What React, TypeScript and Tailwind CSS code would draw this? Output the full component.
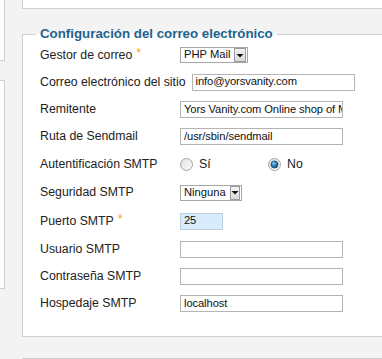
import React from "react";

const font = "font-['Liberation_Sans',Arial,sans-serif]";

function DropButton() {
  return (
    <span className="ml-auto flex h-[14px] w-[16px] items-center justify-center border border-[#9a9a9a] bg-[linear-gradient(180deg,#f4f4f4,#d9d9d9)]">
      <svg width="8" height="5" viewBox="0 0 8 5">
        <path d="M0.5 1h7L4 4.5z" fill="#111" />
      </svg>
    </span>
  );
}

function Select({ value, width }: { value: string; width: number }) {
  return (
    <div
      className="flex h-[16px] items-center border border-[#a7a7a7] bg-white pl-[3px] pr-[1px] text-[11.2px] leading-none text-[#111]"
      style={{ width }}
    >
      <span className="mr-[4px] whitespace-nowrap">{value}</span>
      <DropButton />
    </div>
  );
}

function Input({ value = "", width = 163, blue = false }: { value?: string; width?: number; blue?: boolean }) {
  return (
    <div
      className={`flex h-[17px] items-center overflow-hidden whitespace-nowrap border pl-[3px] text-[11.2px] leading-none tracking-[-0.1px] text-[#111] ${
        blue ? "border-[#b9cfdf] bg-[#d8ecfb]" : "border-[#b4b4b4] bg-white"
      }`}
      style={{ width }}
    >
      {value}
    </div>
  );
}

function Radio({ checked }: { checked?: boolean }) {
  return (
    <svg width="13" height="13" viewBox="0 0 13 13">
      <defs>
        <linearGradient id="rg-off" x1="0" y1="0" x2="1" y2="1">
          <stop offset="0" stopColor="#e2e2e2" />
          <stop offset="1" stopColor="#fbfbfb" />
        </linearGradient>
        <radialGradient id="rg-dot" cx="0.4" cy="0.35" r="0.7">
          <stop offset="0" stopColor="#8fd0f5" />
          <stop offset="0.45" stopColor="#2f82c0" />
          <stop offset="1" stopColor="#14466e" />
        </radialGradient>
      </defs>
      <circle cx="6.5" cy="6.5" r="6" fill="url(#rg-off)" stroke="#a3a3a3" />
      {checked && <circle cx="6.5" cy="6.5" r="3.6" fill="url(#rg-dot)" stroke="#1d4f77" strokeWidth="0.8" />}
    </svg>
  );
}

const rows: { label: string; req?: boolean; h: number; control: React.ReactNode }[] = [
  { label: "Gestor de correo", req: true, h: 26, control: <Select value="PHP Mail" width={68} /> },
  { label: "Correo electrónico del sitio", h: 28, control: <Input value="info@yorsvanity.com" width={163} /> },
  { label: "Remitente", h: 27, control: <Input value="Yors Vanity.com Online shop of Makeup" /> },
  { label: "Ruta de Sendmail", h: 27, control: <Input value="/usr/sbin/sendmail" /> },
  {
    label: "Autentificación SMTP",
    h: 28,
    control: (
      <div className="flex items-center text-[12.3px] text-[#222]">
        <Radio />
        <span className="ml-[6px] w-[69px]">Sí</span>
        <Radio checked />
        <span className="ml-[6px]">No</span>
      </div>
    )
  },
  { label: "Seguridad SMTP", h: 29, control: <Select value="Ninguna" width={62} /> },
  { label: "Puerto SMTP", req: true, h: 28, control: <Input value="25" width={43} blue /> },
  { label: "Usuario SMTP", h: 28, control: <Input /> },
  { label: "Contraseña SMTP", h: 27, control: <Input /> },
  { label: "Hospedaje SMTP", h: 27, control: <Input value="localhost" /> }
];

export default function App() {
  return (
    <div className={`flex h-[359px] w-[382px] overflow-hidden bg-[#f3f3f3] ${font}`}>
      {/* neighbouring column, mostly cut off */}
      <div className="flex w-[5px] shrink-0 flex-col">
        <div className="h-[61px] border-b border-r border-[#cfcfcf] bg-white" />
        <div className="h-[19px]" />
        <div className="h-[209px] border-y border-r border-[#cfcfcf] bg-white" />
      </div>
      <div className="w-[17px] shrink-0" />

      <div className="flex min-w-0 flex-1 flex-col">
        <div className="h-[9px] shrink-0 border-b border-l border-[#cfcfcf] bg-white" />
        <div className="h-[17px] shrink-0" />

        <fieldset className="shrink-0 border border-r-0 border-[#cfcfcf] bg-white p-0">
          <legend className="ml-[13px] px-[4px] text-[13.3px] font-bold leading-[16px] text-[#22638f]">
            Configuración del correo electrónico
          </legend>
          <div className="pb-[19px] pl-[17px]">
            {rows.map((r) => (
              <div key={r.label} className="flex items-center" style={{ height: r.h }}>
                <div className="min-w-[140px] shrink-0 whitespace-nowrap pr-[6px] text-[12.3px] text-[#222]">
                  {r.label}
                  {r.req && <span className="relative -top-[2px] ml-[4px] text-[#f0a52a]">*</span>}
                </div>
                {r.control}
              </div>
            ))}
          </div>
        </fieldset>

        <div className="h-[21px] shrink-0" />
        <div className="flex-1 border-l border-t border-[#cfcfcf] bg-white" />
      </div>
    </div>
  );
}
